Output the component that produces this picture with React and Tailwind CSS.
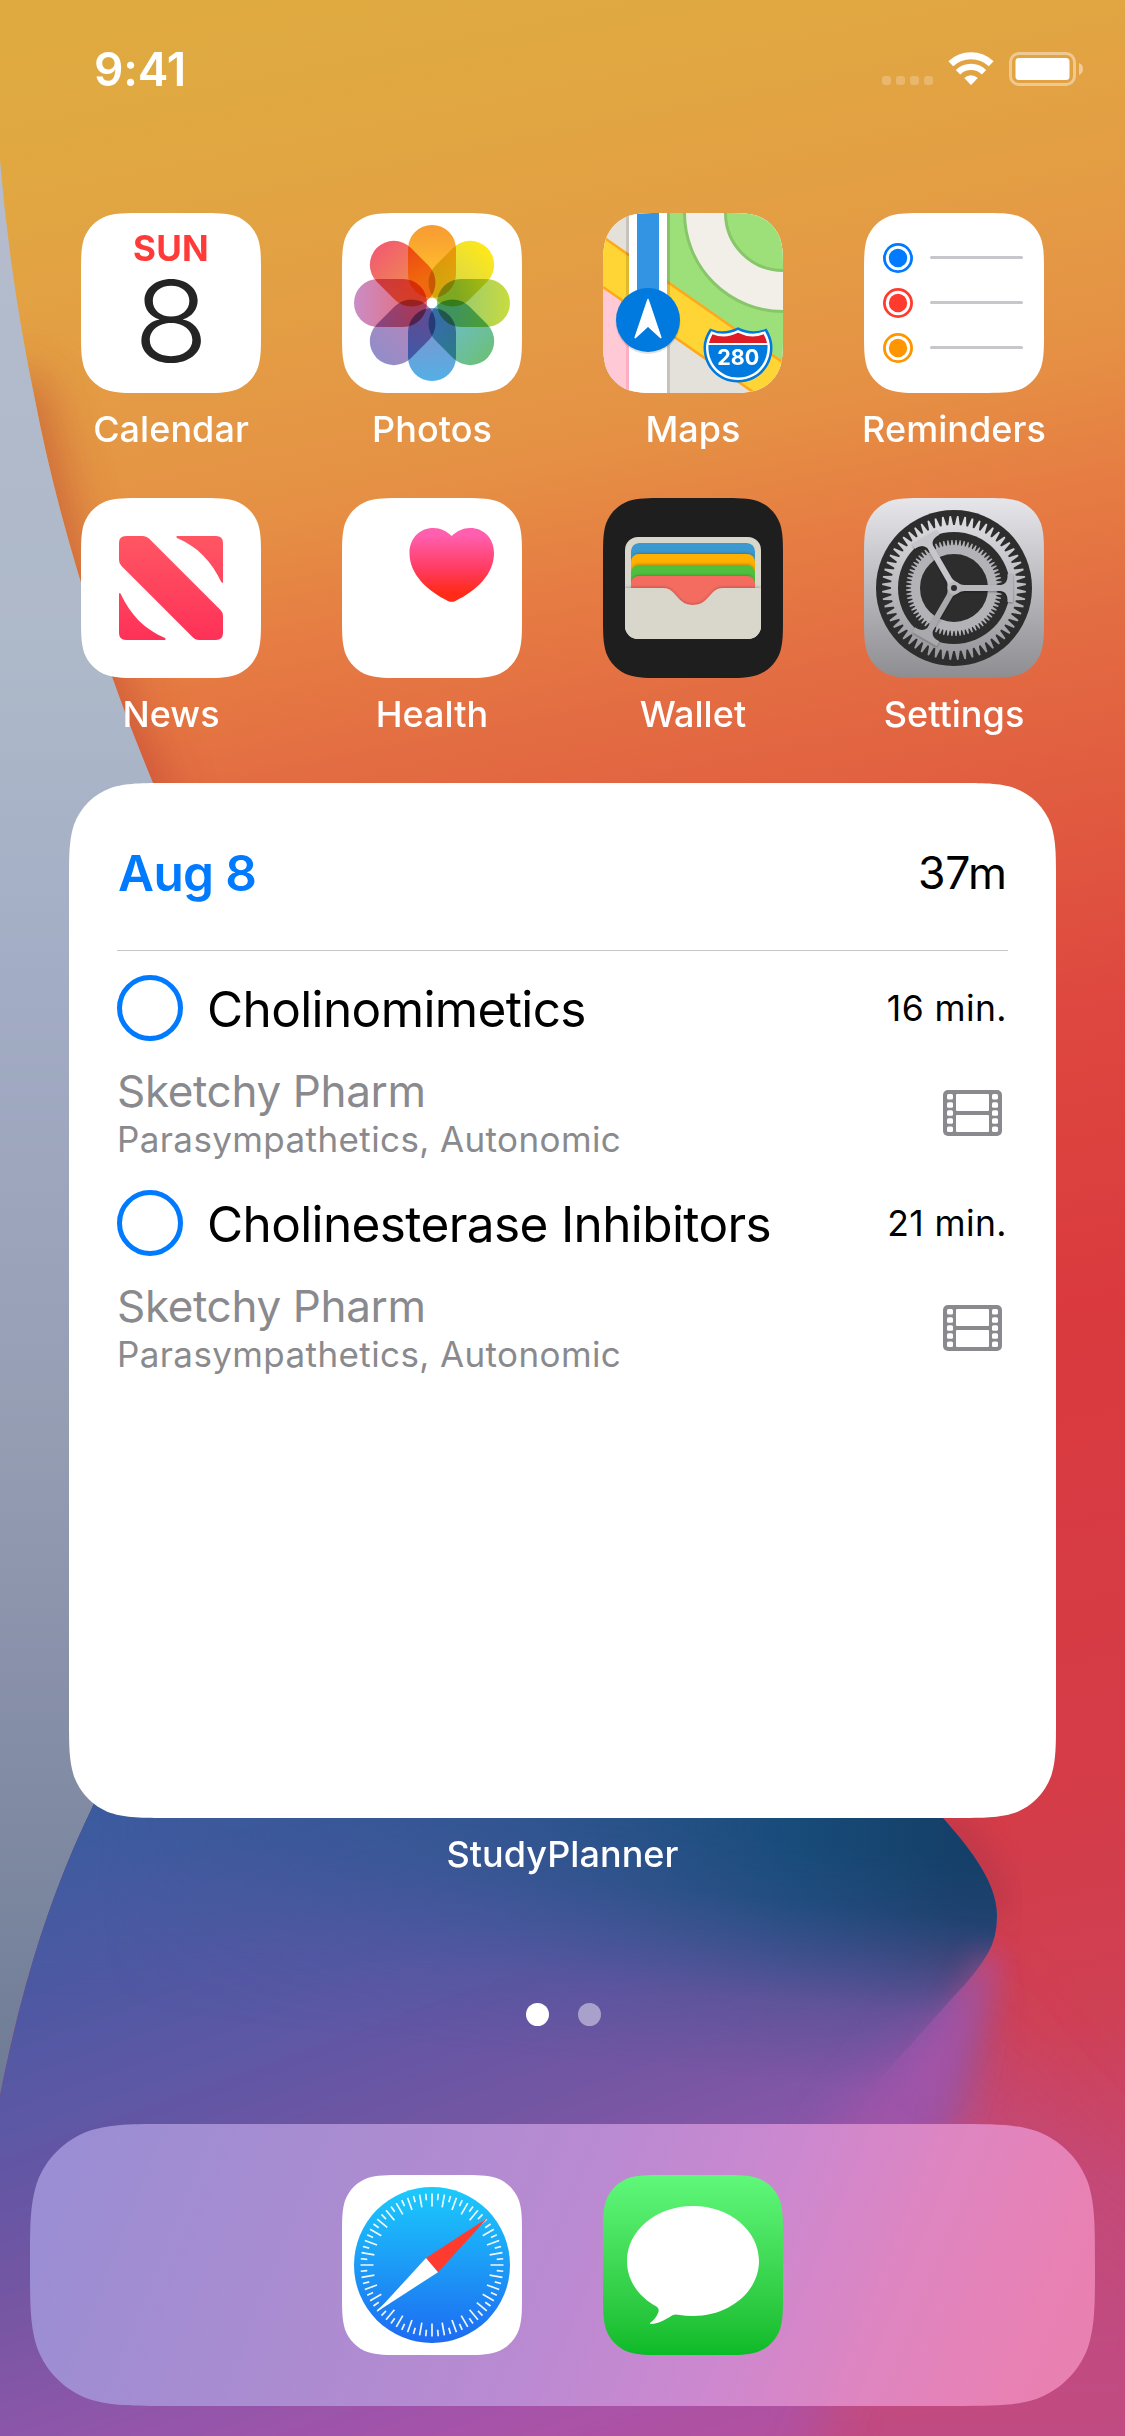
import React from "react";

const FONT = "font-[Inter,'Noto_Sans',sans-serif]";

// Continuous-curvature rounded rectangle.
function squircle(w, h, r) {
  const k = [1.52866, 1.08849, 0.86841, 0.63149, 0.37282, 0.16906, 0.07491].map((v) => v * r);
  const [a, b, c, d, e, f, g] = k;
  return [
    `M${a} 0 L${w - a} 0`,
    `C${w - b} 0 ${w - c} 0 ${w - d} ${g}`,
    `C${w - e} ${f} ${w - f} ${e} ${w - g} ${d}`,
    `C${w} ${c} ${w} ${b} ${w} ${a}`,
    `L${w} ${h - a}`,
    `C${w} ${h - b} ${w} ${h - c} ${w - g} ${h - d}`,
    `C${w - f} ${h - e} ${w - e} ${h - f} ${w - d} ${h - g}`,
    `C${w - c} ${h} ${w - b} ${h} ${w - a} ${h}`,
    `L${a} ${h}`,
    `C${b} ${h} ${c} ${h} ${d} ${h - g}`,
    `C${e} ${h - f} ${f} ${h - e} ${g} ${h - d}`,
    `C0 ${h - c} 0 ${h - b} 0 ${h - a}`,
    `L0 ${a}`,
    `C0 ${b} 0 ${c} ${g} ${d}`,
    `C${f} ${e} ${e} ${f} ${d} ${g}`,
    `C${c} 0 ${b} 0 ${a} 0Z`,
  ].join(" ");
}

const clip = (w, h, r) => ({ clipPath: `path("${squircle(w, h, r)}")` });

function Tile({ className = "bg-white", children }) {
  return (
    <div className={`h-[180px] w-[180px] overflow-hidden ${className}`} style={clip(180, 180, 40.5)}>
      {children}
    </div>
  );
}

function Art({ children }) {
  return (
    <svg viewBox="0 0 180 180" className="block h-[180px] w-[180px]">
      {children}
    </svg>
  );
}

function CalendarIcon() {
  return (
    <Tile className="flex flex-col items-center bg-white">
      <div className="mt-[14px] text-[35px] font-bold leading-[42px] tracking-[0.2px] text-[#ff3b3a]">SUN</div>
      <div className="-mt-[2px] scale-x-110 text-[112px] font-light leading-[108px] text-[#242424]">8</div>
    </Tile>
  );
}

const PETALS = [
  ["#f79a33", "#ffc22a"],
  ["#ffe81a", "#d6d64a"],
  ["#c9dc3e", "#96c873"],
  ["#6cc07a", "#6cbccb"],
  ["#53b0e5", "#7d95ce"],
  ["#928dc9", "#b586bb"],
  ["#c98dc6", "#e56f80"],
  ["#f25c70", "#f08a50"],
];

function PhotosIcon() {
  return (
    <Tile>
      <Art>
        <defs>
          {PETALS.map(([a, b], i) => (
            <linearGradient key={i} id={`petal${i}`} x1="0" y1="0" x2="0" y2="1">
              <stop offset="0" stopColor={a} />
              <stop offset="0.75" stopColor={b} />
            </linearGradient>
          ))}
        </defs>
        <g className="isolate">
          {PETALS.map((_, i) => (
            <rect
              key={i}
              x="66"
              y="12"
              width="48"
              height="73"
              rx="24"
              fill={`url(#petal${i})`}
              transform={`rotate(${i * 45} 90 90)`}
              className="mix-blend-multiply"
            />
          ))}
        </g>
        <circle cx="90" cy="90" r="5" fill="#fff" />
      </Art>
    </Tile>
  );
}

function MapsIcon() {
  return (
    <Tile>
      <Art>
        <rect width="180" height="180" fill="#e4e1da" />
        <path d="M64 0H180V149L64 68Z" fill="#9de07a" />
        <circle cx="180" cy="0" r="98.5" fill="#f2efe9" stroke="#87c669" strokeWidth="3" />
        <circle cx="180" cy="0" r="57.5" fill="#9de07a" stroke="#87c669" strokeWidth="3" />
        <path d="M0 73L26 91V180H0Z" fill="#ffcad6" />
        <path d="M23 88L26 91V180H23Z" fill="#ffafc2" />
        <path d="M0 24L180 149V201L0 74Z" fill="#ffd535" />
        <path d="M0 24L180 149.500M0 74L180 200" stroke="#ffa81a" strokeWidth="2.6" />
        <rect x="23" width="3" height="88" fill="#000" opacity=".13" />
        <rect x="64" width="3" height="180" fill="#000" opacity=".13" />
        <rect x="26" width="38" height="180" fill="#fff" />
        <rect x="34" width="22" height="90" fill="#3494e4" />
        <circle cx="45" cy="108.500" r="32.500" fill="#000" opacity=".12" />
        <circle cx="45" cy="107" r="32" fill="#007adf" />
        <path d="M45 86.500L57.800 124.600L45 113L32.200 124.600Z" fill="#fff" stroke="#fff" strokeWidth="1.500" strokeLinejoin="round" />
        <path
          d="M107 115.500Q120 121.500 135 114.200Q150 121.500 163.500 115.500Q169.500 125 169.500 134.500C169.500 154 155 169.500 135 169.500C115 169.500 100.500 154 100.500 134.500Q100.500 125 107 115.500Z"
          fill="#007adf"
        />
        <path
          d="M108.300 118.200Q121 123.800 135 117Q149 123.800 162 118.200Q167 127 167 134.500C167 152 154 167 135 167C116 167 103 152 103 134.500Q103 127 108.300 118.200Z"
          fill="#fff"
        />
        <path d="M109.500 121.300Q122 126.300 135 119.800Q148 126.300 160.700 121.300Q163.200 126 164 130H106Q107 126 109.500 121.300Z" fill="#dd1c26" />
        <path d="M105.500 132H164.500C165.500 150 153 164.500 135 164.500C117 164.500 104.500 150 105.500 132Z" fill="#007adf" />
        <text x="135.300" y="151.800" textAnchor="middle" className={`${FONT} text-[21.5px] font-bold`} fill="#fff">
          280
        </text>
      </Art>
    </Tile>
  );
}

function RemindersIcon() {
  return (
    <Tile>
      <Art>
        {["#007aff", "#ff3b30", "#ff9500"].map((color, i) => (
          <g key={color}>
            <circle cx="34" cy={45 + i * 45} r="13.600" fill="none" stroke={color} strokeWidth="2.800" />
            <circle cx="34" cy={45 + i * 45} r="9.200" fill={color} />
            <rect x="66" y={43 + i * 45} width="93" height="3" rx="1.500" fill="#c6c6cb" />
          </g>
        ))}
      </Art>
    </Tile>
  );
}

function NewsIcon() {
  return (
    <Tile>
      <Art>
        <defs>
          <linearGradient id="news" gradientUnits="userSpaceOnUse" x1="0" y1="38" x2="0" y2="142">
            <stop offset="0" stopColor="#ff5663" />
            <stop offset="1" stopColor="#fe3158" />
          </linearGradient>
        </defs>
        <g fill="url(#news)">
          <path d="M45 38H62Q65.500 38 68 40.500L139.500 112Q142 114.500 142 118V135Q142 142 135 142H118Q114.500 142 112 139.500L40.500 68Q38 65.500 38 62V45Q38 38 45 38Z" />
          <path d="M96 38H135Q142 38 142 45V84Q141.500 86 140 83.500C131 64 116.500 48.500 96 40Q94.500 38.800 96 38Z" />
          <path d="M84 142H45Q38 142 38 135V96Q38.500 94 40 96.500C49 116 63.500 131.500 84 140Q85.500 141.200 84 142Z" />
        </g>
      </Art>
    </Tile>
  );
}

function HealthIcon() {
  return (
    <Tile>
      <Art>
        <defs>
          <linearGradient id="heart" x1="0" y1="0" x2="0" y2="1">
            <stop offset="0.100" stopColor="#ff5fae" />
            <stop offset="0.550" stopColor="#ff3c62" />
            <stop offset="0.880" stopColor="#ff2a18" />
          </linearGradient>
        </defs>
        <path
          d="M109.700 38C115 33 121 30 128 30C142 30 152 40.500 152 55C152 76 135 92.500 113 103.200Q109.700 104.500 106.400 103.200C84.500 92.500 67.500 76 67.500 55C67.500 40.500 77.500 30 91.500 30C98.500 30 104.500 33 109.700 38Z"
          fill="url(#heart)"
        />
      </Art>
    </Tile>
  );
}

function WalletIcon() {
  return (
    <Tile className="bg-[#1f1e1f]">
      <Art>
        <defs>
          <filter id="cardShadow" x="-10%" y="-30%" width="120%" height="160%">
            <feDropShadow dx="0" dy="-0.500" stdDeviation="1.500" floodOpacity=".28" />
          </filter>
          <clipPath id="pocket">
            <rect x="22" y="39" width="136" height="102" rx="13" />
          </clipPath>
          <clipPath id="slot">
            <rect x="28" y="45" width="124" height="80" rx="8" />
          </clipPath>
        </defs>
        <rect x="22" y="39" width="136" height="102" rx="13" fill="#d9d7cb" />
        <g clipPath="url(#slot)">
          <rect x="28" y="45" width="124" height="60" rx="8" fill="#3b99cf" />
          <rect x="28" y="56" width="124" height="60" rx="8" fill="#ffb005" filter="url(#cardShadow)" />
          <rect x="28" y="67" width="124" height="60" rx="8" fill="#50bf3d" filter="url(#cardShadow)" />
          <rect x="28" y="78" width="124" height="60" rx="8" fill="#f46c60" filter="url(#cardShadow)" />
        </g>
        <g clipPath="url(#pocket)">
          <path
            d="M22 90H60C74 90 73 107 90 107C107 107 106 90 120 90H158V150H22Z"
            fill="#d9d7cb"
            filter="url(#cardShadow)"
          />
        </g>
      </Art>
    </Tile>
  );
}

function teeth(count, inner, outer, baseWidth, tipWidth) {
  return Array.from({ length: count }, (_, i) => (
    <path
      key={i}
      d={`M${90 - baseWidth / 2} ${90 - inner}L${90 - tipWidth / 2} ${90 - outer}H${90 + tipWidth / 2}L${90 + baseWidth / 2} ${90 - inner}Z`}
      transform={`rotate(${((i + 0.5) * 360) / count} 90 90)`}
    />
  ));
}

function SettingsIcon() {
  return (
    <Tile className="bg-linear-to-b from-[#e6e6eb] to-[#8d8d92]">
      <Art>
        <defs>
          <linearGradient id="gear" gradientUnits="userSpaceOnUse" x1="0" y1="0" x2="0" y2="180">
            <stop offset="0" stopColor="#e6e6eb" />
            <stop offset="1" stopColor="#8d8d92" />
          </linearGradient>
          <filter id="gearShadow">
            <feDropShadow dx="0" dy="1" stdDeviation="1" floodOpacity=".35" />
          </filter>
        </defs>
        <circle cx="90" cy="90" r="78" fill="#2d2d2d" />
        <circle cx="90" cy="90" r="63" fill="url(#gear)" />
        {Array.from({ length: 60 }, (_, i) => {
          const a = ((i + 0.5) * Math.PI * 2) / 60;
          const p = (r, o) => `${90 + r * Math.sin(a + o)} ${90 - r * Math.cos(a + o)}`;
          return <path key={i} d={`M${p(62, -0.043)}L${p(72, -0.011)}L${p(72, 0.011)}L${p(62, 0.043)}Z`} fill="url(#gear)" />;
        })}
        <circle cx="90" cy="90" r="56" fill="#2d2d2d" />
        <g fill="#b3b2b7">
          {teeth(72, 42, 48, 3, 1.2)}
          <circle cx="90" cy="90" r="38.500" fill="none" stroke="#b3b2b7" strokeWidth="9" />
        </g>
        <g filter="url(#gearShadow)">
          {[0, 120, 240].map((a) => (
            <path
              key={a}
              transform={`rotate(${a} 90 90)`}
              d="M90 84C95 84 95 87 100 87H137C142 86 144 82 143.500 76L149 76V104L143.500 104C144 98 142 94 137 93H100C95 93 95 96 90 96Z"
              fill={a === 0 ? "#b7b7bc" : a === 120 ? "#a8a8ad" : "#c6c6cb"}
            />
          ))}
          <circle cx="90" cy="90" r="6.500" fill="#b8b8bd" />
        </g>
        <circle cx="90" cy="90" r="3" fill="#2d2d2d" />
      </Art>
    </Tile>
  );
}

function SafariIcon() {
  return (
    <Tile>
      <Art>
        <defs>
          <linearGradient id="dial" x1="0" y1="0" x2="0" y2="1">
            <stop offset="0" stopColor="#1bcbfc" />
            <stop offset="1" stopColor="#1d6bf1" />
          </linearGradient>
        </defs>
        <circle cx="90" cy="90" r="78" fill="url(#dial)" />
        {Array.from({ length: 72 }, (_, i) => (
          <line
            key={i}
            x1="90"
            x2="90"
            y1="18.500"
            y2={i % 2 ? 25 : 31.5}
            stroke="#fff"
            strokeWidth="1.700"
            strokeOpacity=".92"
            transform={`rotate(${i * 5} 90 90)`}
          />
        ))}
        <path d="M84 83L145.800 42.800L96 97.200Z" fill="#ff3b30" />
        <path d="M84 83L34.500 137L96 97.200Z" fill="#fff" />
      </Art>
    </Tile>
  );
}

function MessagesIcon() {
  return (
    <Tile className="bg-linear-to-b from-[#60f87a] to-[#0bba27]">
      <Art>
        <path
          d="M90 31C53.500 31 24 55.500 24 86C24 105 35 121.500 53.500 131.500Q57 134 55 138C53.500 142 51 145 47.500 147.500Q46 149.500 49 149C57 148 64.500 143.500 70 140Q72 139 75 139.700C80 140.600 85 141 90 141C126.500 141 156 116.500 156 86C156 55.500 126.500 31 90 31Z"
          fill="#fff"
        />
      </Art>
    </Tile>
  );
}

const APPS = [
  ["Calendar", CalendarIcon],
  ["Photos", PhotosIcon],
  ["Maps", MapsIcon],
  ["Reminders", RemindersIcon],
  ["News", NewsIcon],
  ["Health", HealthIcon],
  ["Wallet", WalletIcon],
  ["Settings", SettingsIcon],
];

const TASKS = [
  { title: "Cholinomimetics", time: "16 min.", source: "Sketchy Pharm", topic: "Parasympathetics, Autonomic" },
  { title: "Cholinesterase Inhibitors", time: "21 min.", source: "Sketchy Pharm", topic: "Parasympathetics, Autonomic" },
];

function FilmIcon() {
  return (
    <svg viewBox="0 0 59 46" className="mr-[6px] mt-px block h-[46px] w-[59px]">
      <rect width="59" height="46" rx="5" fill="#8a8a8e" />
      <rect x="13" y="4" width="33" height="17" rx="1" fill="#fff" />
      <rect x="13" y="25" width="33" height="17" rx="1" fill="#fff" />
      {[4, 12.2, 20.2, 28.2, 36.4].map((y) => (
        <g key={y} fill="#fff">
          <rect x="4" y={y} width="6" height="5.600" rx="1.500" />
          <rect x="49" y={y} width="6" height="5.600" rx="1.500" />
        </g>
      ))}
    </svg>
  );
}

function Task({ title, time, source, topic }) {
  return (
    <li className="h-[215px]">
      <div className="flex h-[66px] items-center">
        <span className="h-[66px] w-[66px] rounded-full border-[5px] border-[#007aff]" />
        <span className="ml-[24px] mt-[2px] text-[49.5px] leading-[60px] tracking-[-0.62px] text-black">{title}</span>
        <span className="ml-auto mr-[1px] mt-[2px] text-[35.5px] leading-[42px] tracking-[0.4px] text-black">{time}</span>
      </div>
      <div className="mt-[23px] flex items-center justify-between text-[#8a8a8e]">
        <div>
          <div className="text-[44px] leading-[54px] tracking-[-0.35px]">{source}</div>
          <div className="text-[35px] leading-[42px] tracking-[0.39px]">{topic}</div>
        </div>
        <FilmIcon />
      </div>
    </li>
  );
}

function StatusBar() {
  return (
    <header className="flex h-[213px] items-start justify-between pl-[94px] pr-[42px] pt-[42px] text-white">
      <div className="text-[46px] font-semibold leading-[54px] tracking-[-0.2px]">9:41</div>
      <svg viewBox="0 0 202 34" className="mt-[10px] block h-[34px] w-[202px]">
        <g fill="#fff" opacity=".22">
          {[0.5, 14.5, 28.5, 42.5].map((x) => (
            <rect key={x} x={x + 0.5} y="24" width="9" height="9" rx="3" />
          ))}
        </g>
        <g fill="none" stroke="#fff">
          <path d="M69.800 10.800A29.500 29.500 0 0 1 110.200 10.800" strokeWidth="7" transform="translate(0 1)" />
          <path d="M77 20.200A18.500 18.500 0 0 1 103 20.200" strokeWidth="6.200" />
        </g>
        <path d="M83.300 26A9.500 9.500 0 0 1 96.800 26L90.600 32.500Q90 33 89.400 32.500Z" fill="#fff" />
        <rect x="129.500" y="1.500" width="64" height="31" rx="8.500" fill="none" stroke="#fff" strokeWidth="3" opacity=".42" />
        <rect x="134.500" y="6" width="54" height="22" rx="3.500" fill="#fff" />
        <path d="M198 11Q202 12.500 202 17T198 23Z" fill="#fff" opacity=".45" />
      </svg>
    </header>
  );
}

function Wallpaper() {
  return (
    <svg viewBox="0 0 1125 2436" className="absolute inset-0 -z-10 h-full w-full">
      <defs>
        <linearGradient id="warm" gradientUnits="userSpaceOnUse" x1="0" y1="0" x2="462" y2="2308">
          <stop offset="0" stopColor="#deab40" />
          <stop offset="0.080" stopColor="#e1a742" />
          <stop offset="0.170" stopColor="#e49c44" />
          <stop offset="0.237" stopColor="#e59044" />
          <stop offset="0.290" stopColor="#e67d43" />
          <stop offset="0.350" stopColor="#e36c42" />
          <stop offset="0.410" stopColor="#e15e40" />
          <stop offset="0.510" stopColor="#de473f" />
          <stop offset="0.635" stopColor="#da3a3e" />
          <stop offset="0.840" stopColor="#d43c48" />
          <stop offset="0.930" stopColor="#cf4054" />
          <stop offset="1" stopColor="#c74770" />
        </linearGradient>
        <linearGradient id="slate" gradientUnits="userSpaceOnUse" x1="0" y1="200" x2="0" y2="2100">
          <stop offset="0" stopColor="#b4bccd" />
          <stop offset="0.250" stopColor="#adb8c9" />
          <stop offset="0.400" stopColor="#a3adc5" />
          <stop offset="0.650" stopColor="#959db3" />
          <stop offset="0.850" stopColor="#808aa3" />
          <stop offset="1" stopColor="#6e7b95" />
        </linearGradient>
        <linearGradient id="violet" gradientUnits="userSpaceOnUse" x1="0" y1="1850" x2="295" y2="2670">
          <stop offset="0" stopColor="#3c5b9f" />
          <stop offset="0.280" stopColor="#5a58a5" />
          <stop offset="0.480" stopColor="#7356a3" />
          <stop offset="0.640" stopColor="#8c56a9" />
          <stop offset="0.800" stopColor="#a652aa" />
          <stop offset="1" stopColor="#b8509a" />
        </linearGradient>
        <linearGradient id="teal" gradientUnits="userSpaceOnUse" x1="100" y1="0" x2="960" y2="0">
          <stop offset="0" stopColor="#1f5486" stopOpacity="0" />
          <stop offset="0.450" stopColor="#1f5486" stopOpacity=".58" />
          <stop offset="0.800" stopColor="#184c7a" stopOpacity="1" />
          <stop offset="1" stopColor="#143f68" />
        </linearGradient>
        <linearGradient id="fade" gradientUnits="userSpaceOnUse" x1="700" y1="1830" x2="676" y2="2070">
          <stop offset="0" stopColor="#fff" />
          <stop offset="0.250" stopColor="#fff" stopOpacity=".88" />
          <stop offset="0.450" stopColor="#fff" stopOpacity=".58" />
          <stop offset="0.680" stopColor="#fff" stopOpacity=".2" />
          <stop offset="1" stopColor="#fff" stopOpacity="0" />
        </linearGradient>
        <linearGradient id="baseFade" gradientUnits="userSpaceOnUse" x1="0" y1="1935" x2="0" y2="1995">
          <stop offset="0" stopColor="#fff" />
          <stop offset="1" stopColor="#fff" stopOpacity="0" />
        </linearGradient>
        <linearGradient id="rose" gradientUnits="userSpaceOnUse" x1="0" y1="1930" x2="0" y2="2400">
          <stop offset="0" stopColor="#b84e92" stopOpacity="0" />
          <stop offset="0.450" stopColor="#c04b7c" stopOpacity=".75" />
          <stop offset="1" stopColor="#c04b84" stopOpacity=".9" />
        </linearGradient>
        <mask id="tealMask" maskUnits="userSpaceOnUse" x="0" y="1600" width="1125" height="600">
          <rect x="0" y="1600" width="1125" height="600" fill="url(#fade)" />
        </mask>
        <mask id="baseMask" maskUnits="userSpaceOnUse" x="0" y="1600" width="1125" height="600">
          <rect x="0" y="1600" width="1125" height="600" fill="url(#baseFade)" />
        </mask>
        <filter id="soft10" x="-40%" y="-40%" width="180%" height="180%">
          <feGaussianBlur stdDeviation="14" />
        </filter>
        <filter id="soft30" x="-50%" y="-50%" width="200%" height="200%">
          <feGaussianBlur stdDeviation="24" />
        </filter>
        <filter id="soft50" x="-50%" y="-50%" width="200%" height="200%">
          <feGaussianBlur stdDeviation="45" />
        </filter>
        <clipPath id="bodyClip">
          <path d="M92 1808C50 1895 22 1985 0 2095V2436H1125V1700H140Z" />
        </clipPath>
        <clipPath id="warmClip">
          <path d="M0 160Q10 280 35 400C58 520 100 655 153 783L500 1300L1125 1300V0H0Z" />
        </clipPath>
        <clipPath id="leafClip">
          <path d="M0 1700H830C870 1750 910 1780 943 1818C965 1843 997 1880 997 1915Q997 1938 988 1953Q975 1975 955 1995L870 2090H0V1700Z" />
        </clipPath>
      </defs>
      <rect width="1125" height="2436" fill="url(#warm)" />
      <g clipPath="url(#warmClip)">
        <path d="M14 380Q22 420 38 490C60 600 98 710 150 820" fill="none" stroke="#b5382f" strokeWidth="56" opacity=".5" filter="url(#soft30)" />
      </g>
      <path d="M0 160Q10 280 35 400C58 520 100 655 153 783L500 1300L140 1700L92 1808C50 1895 22 1985 0 2095Z" fill="url(#slate)" />
      <g clipPath="url(#bodyClip)">
        <path d="M975 2010Q1050 2170 1240 2280V2560H600V2100Z" fill="url(#rose)" filter="url(#soft50)" />
        <path d="M943 1818C965 1843 999 1880 999 1915" fill="none" stroke="#a53048" strokeWidth="30" opacity=".45" filter="url(#soft10)" />
        <path d="M-100 1650H840V1850L920 1920L970 1965Q985 2010 955 2110L880 2250L780 2550H-100Z" fill="url(#violet)" filter="url(#soft30)" />
        <path d="M980 1970Q970 2010 955 2070L925 2190L780 2230Q840 2110 905 2040Z" fill="#ac53a9" opacity=".6" filter="url(#soft30)" />
        <g clipPath="url(#leafClip)">
          <rect x="0" y="1700" width="1125" height="400" fill="url(#violet)" mask="url(#baseMask)" />
          <rect x="0" y="1700" width="1125" height="400" fill="url(#teal)" mask="url(#tealMask)" />
        </g>
        <path d="M992 1956Q978 1990 955 2030L925 2090" fill="none" stroke="#ae53a6" strokeWidth="24" opacity=".6" filter="url(#soft10)" />
      </g>
    </svg>
  );
}

const LABEL = "mt-[15px] whitespace-nowrap text-center text-[36px] font-medium leading-[42px] text-white";

export default function App() {
  return (
    <div className={`relative isolate flex h-[2436px] w-[1125px] flex-col overflow-hidden antialiased ${FONT}`}>
      <Wallpaper />
      <StatusBar />

      <main className="flex flex-col">
        <div className="grid grid-cols-[repeat(4,180px)] gap-x-[81px] gap-y-[48px] pl-[81px]">
          {APPS.map(([name, Icon]) => (
            <div key={name} className="flex flex-col items-center">
              <Icon />
              <div className={`${LABEL} tracking-[0.05px]`}>{name}</div>
            </div>
          ))}
        </div>

        <section className="ml-[69px] mt-[48px] h-[1035px] w-[987px] bg-white px-[48px]" style={clip(987, 1035, 66)}>
          <div className="flex h-[168px] items-center justify-between border-b border-[#c6c6c8] pt-[13px]">
            <h1 className="pl-[1px] text-[49.5px] font-semibold leading-[60px] tracking-[-0.6px] text-[#007aff]">Aug 8</h1>
            <span className="mr-[1px] text-[44.5px] leading-[54px] tracking-[-0.1px] text-black">37m</span>
          </div>
          <ul className="mt-[24px]">
            {TASKS.map((task) => (
              <Task key={task.title} {...task} />
            ))}
          </ul>
        </section>
        <div className={`${LABEL} tracking-[0.05px]`}>StudyPlanner</div>
      </main>

      <nav className="mt-[128px] flex justify-center gap-[29px] pl-[2px]">
        <span className="h-[23px] w-[23px] rounded-full bg-white" />
        <span className="h-[23px] w-[23px] rounded-full bg-white/45" />
      </nav>

      <footer
        className="mx-[30px] mt-[98px] flex h-[282px] justify-center gap-[81px] bg-[linear-gradient(112deg,#988ed4_0%,#aa8cd1_28%,#ba8ad2_50%,#cc88cf_66%,#df85c0_80%,#e881b4_92%,#e880b0_100%)] pt-[51px]"
        style={clip(1065, 282, 93)}
      >
        <SafariIcon />
        <MessagesIcon />
      </footer>
    </div>
  );
}
